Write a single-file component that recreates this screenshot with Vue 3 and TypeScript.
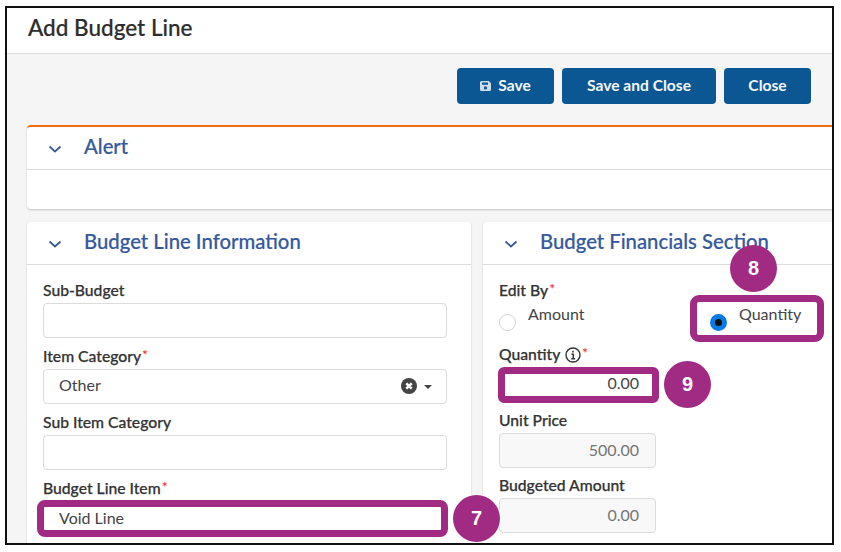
<script setup lang="ts">
interface Field {
  label: string
  required?: boolean
  value?: string
  info?: boolean
  kind?: 'select' | 'readonly' | 'marked'
}
const leftFields: Field[] = [
  { label: 'Sub-Budget' },
  { label: 'Item Category', required: true, value: 'Other', kind: 'select' },
  { label: 'Sub Item Category' },
  { label: 'Budget Line Item', required: true, value: 'Void Line', kind: 'marked' },
]
const rightFields: Field[] = [
  { label: 'Quantity', required: true, info: true, value: '0.00', kind: 'marked' },
  { label: 'Unit Price', value: '500.00', kind: 'readonly' },
  { label: 'Budgeted Amount', value: '0.00', kind: 'readonly' },
]
</script>

<template>
  <div class="frame">
    <header class="title-bar"><h1>Add Budget Line</h1></header>
    <main class="page">
      <div class="toolbar">
        <button class="btn" type="button">
          <svg class="save-icon" viewBox="0 0 12 12" width="12" height="12" aria-hidden="true">
            <path fill="#cfdbe6" fill-rule="evenodd" d="M1.500 1h7.300L11 3.200v6.300A1.500 1.500 0 0 1 9.500 11h-8A1.500 1.500 0 0 1 0 9.500v-7A1.500 1.500 0 0 1 1.500 1ZM2 2.500v2.300h6V2.500ZM5.500 6.300a1.600 1.600 0 1 0 0 3.200 1.600 1.600 0 0 0 0-3.200Z" />
          </svg>
          Save
        </button>
        <button class="btn wide" type="button">Save and Close</button>
        <button class="btn close" type="button">Close</button>
      </div>

      <section class="card alert">
        <div class="card-head">
          <svg class="chev" viewBox="0 0 14 8" width="14" height="8" aria-hidden="true"><path d="M1.500 1.500 7 6.500l5.500-5" /></svg>
          <h2>Alert</h2>
        </div>
        <div class="alert-body"></div>
      </section>

      <div class="columns">
        <section class="card col-left">
          <div class="card-head">
            <svg class="chev" viewBox="0 0 14 8" width="14" height="8" aria-hidden="true"><path d="M1.500 1.500 7 6.500l5.500-5" /></svg>
            <h2>Budget Line Information</h2>
          </div>
          <div class="form">
            <div v-for="f in leftFields" :key="f.label" class="field">
              <label>{{ f.label }}<span v-if="f.required" class="req">*</span></label>
              <div class="input" :class="f.kind">
                <span>{{ f.value }}</span>
                <template v-if="f.kind === 'select'">
                  <svg class="clear" viewBox="0 0 16 16" width="16" height="16" aria-hidden="true">
                    <circle cx="8" cy="8" r="8" fill="#444" />
                    <path d="M5.300 5.300l5.400 5.400M10.700 5.300l-5.400 5.400" stroke="#fff" stroke-width="2.600" />
                  </svg>
                  <i class="caret"></i>
                </template>
              </div>
            </div>
          </div>
        </section>

        <section class="card col-right">
          <div class="card-head">
            <svg class="chev" viewBox="0 0 14 8" width="14" height="8" aria-hidden="true"><path d="M1.500 1.500 7 6.500l5.500-5" /></svg>
            <h2>Budget Financials Section</h2>
          </div>
          <div class="form">
            <div class="edit-by">
              <label>Edit By<span class="req">*</span></label>
              <div class="radios">
                <div class="radio-item amount"><i class="radio"></i><span>Amount</span></div>
                <div class="radio-item quantity"><i class="radio on"></i><span>Quantity</span></div>
              </div>
            </div>
            <div v-for="f in rightFields" :key="f.label" class="field narrow">
              <label>
                {{ f.label }}
                <svg v-if="f.info" class="info" viewBox="0 0 16 16" width="16" height="16" aria-hidden="true">
                  <circle cx="8" cy="8" r="7" fill="none" stroke="#333" stroke-width="1.400" />
                  <path d="M8 3.800v1.700M6.500 7.200H8.300v4.300M6.300 11.800h3.800" fill="none" stroke="#333" stroke-width="1.500" />
                </svg><span v-if="f.required" class="req">*</span>
              </label>
              <div class="input num" :class="f.kind"><span>{{ f.value }}</span></div>
            </div>
          </div>
        </section>
      </div>
    </main>

    <div class="hl hl-radio"></div>
    <div class="badge b7">7</div>
    <div class="badge b8">8</div>
    <div class="badge b9">9</div>
  </div>
</template>

<style>
html, body { margin: 0; background: #fff; }
</style>

<style scoped>
.frame {
  position: relative;
  box-sizing: border-box;
  width: 829px;
  height: 539px;
  margin: 6px 0 0 5px;
  border: 2px solid #111;
  overflow: hidden;
  background: #f5f5f5;
  font-family: Lato, "Liberation Sans", sans-serif;
  color: #333;
}
.title-bar {
  box-sizing: border-box;
  height: 46px;
  padding: 7px 0 0 21px;
  background: #fff;
  border-bottom: 1px solid #dcdcdc;
}
h1 { margin: 0; font-size: 22.500px; line-height: 26px; font-weight: 500; color: #2d2d2d; -webkit-text-stroke: .2px #2d2d2d; }
.page { width: 870px; padding: 14px 0 0 20px; box-sizing: border-box; }
.toolbar { display: flex; gap: 8px; width: 784px; justify-content: flex-end; height: 36px; }
.btn {
  display: flex; align-items: center; justify-content: center; gap: 6px;
  width: 97px; height: 36px; padding: 0 0 2px;
  border: 0; border-radius: 4px;
  background: #0b5794; color: #f2f6fa;
  font: 700 15.600px Lato, "Liberation Sans", sans-serif;
}
.btn.wide { width: 154px; }
.btn.close { width: 87px; }
.save-icon { flex: none; margin-top: 2px; }
.card {
  background: #fff;
  border-radius: 4px;
  box-shadow: 0 1px 2px rgba(0, 0, 0, .2);
}
.alert { margin-top: 21px; border-top: 2px solid #f26d0f; }
.card-head {
  display: flex; align-items: center;
  height: 42px;
  border-bottom: 1px solid #dcdcdc;
  padding-left: 21px;
  box-sizing: content-box;
}
h2 { margin: -5px 0 0 22px; font-size: 20.300px; font-weight: 500; color: #36599b; line-height: 26px; -webkit-text-stroke: .2px #36599b; }
.chev { fill: none; stroke: #36599b; stroke-width: 1.700; flex: none; margin-top: 1px; }
.alert-body { height: 39px; }
.columns { display: flex; gap: 12px; margin-top: 13px; align-items: flex-start; }
.col-left { width: 444px; height: 330px; }
.col-right { width: 380px; height: 330px; }
.form { padding: 14px 16px 0; }
.field { margin-bottom: 7px; }
label {
  display: block;
  height: 24px;
  font-size: 15.700px; line-height: 22px; font-weight: 500; color: #333;
  -webkit-text-stroke: .25px #333;
}
.req { color: #e5252a; font-size: 14px; position: relative; top: -2px; margin-left: 1px; -webkit-text-stroke: 0; }
.input {
  box-sizing: border-box;
  display: flex; align-items: center;
  width: 404px; height: 35px;
  padding: 0 16px 4px 15px;
  background: #fff;
  border: 1px solid #dcdcdc;
  border-radius: 4px;
  font-size: 16px;
  color: #444;
}
.input > span { flex: 1; }
.input.marked {
  width: 411px; height: 37px;
  margin-left: -6px;
  border: 7px solid #a12a82;
  border-radius: 8px;
  padding: 0 0 3px 15px;
  margin-top: -1px;
}
.clear { margin-right: 7px; margin-left: auto; flex: none; margin-top: 3px; }
.caret {
  width: 0; height: 0; margin-right: -2px; margin-top: 4px;
  border-left: 4px solid transparent; border-right: 4px solid transparent;
  border-top: 4px solid #444;
}
.narrow .input { width: 157px; text-align: right; }
.narrow .input.num { padding: 0 16px 3px 0; }
.narrow .input.marked { width: 161px; height: 36px; margin-left: -1px; border-radius: 6px; padding: 0 13px 5px 0; margin-top: 0; }
.input.readonly { background: #f8f8f8; color: #757575; }
.narrow { margin-bottom: 6px; }
.narrow label { height: 24px; }
.info { vertical-align: -3px; margin-left: 1px; }
.edit-by { height: 64px; }
.radios { display: flex; }
.radio-item { display: flex; font-size: 16px; color: #444; }
.radio-item.amount { width: 211px; }
.radio-item span { position: relative; top: 1px; line-height: 20px; }
.radio {
  box-sizing: border-box;
  width: 17px; height: 17px;
  margin: 11px 12px 0 0;
  border: 1px solid #d4d4d4;
  border-radius: 50%;
  background: #fff;
}
.radio.on { border: 5px solid #0a7ae6; background: #111; }
.hl {
  position: absolute;
  left: 683px; top: 287px;
  width: 134px; height: 47px;
  box-sizing: border-box;
  border: 7px solid #a12a82;
  border-radius: 9px;
}
.badge {
  position: absolute;
  box-sizing: border-box;
  width: 47px; height: 47px;
  border-radius: 50%;
  background: #a12a82;
  color: #fff;
  font: 700 20px/47px "Liberation Sans", Arial, sans-serif;
  text-align: center;
}
.b7 { left: 446px; top: 487px; box-shadow: 0 0 0 1px #fff; }
.b8 { left: 723px; top: 237px; }
.b9 { left: 657px; top: 353px; }
</style>
